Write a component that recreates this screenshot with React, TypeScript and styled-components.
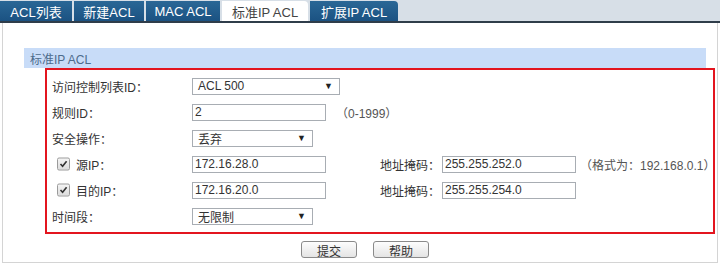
import styled, { createGlobalStyle } from "styled-components";

const GlobalStyle = createGlobalStyle`
  html, body {
    margin: 0;
    padding: 0;
    background: #fff;
  }
  body {
    font-family: "Liberation Sans", "Noto Sans CJK SC", Arial, sans-serif;
    color: #333;
  }
`;

const Page = styled.div`
  width: 720px;
  height: 265px;
  overflow: hidden;
  display: flex;
  flex-direction: column;
`;

const TabBar = styled.div`
  height: 20px;
  padding-top: 1px;
  display: flex;
  align-items: flex-end;
  background: #d7dfe7;
  border-bottom: 2px solid #2f3d4a;
`;

const Tab = styled.div<{ active?: boolean; width: number }>`
  width: ${(p) => p.width}px;
  height: 20px;
  margin-right: 2px;
  display: flex;
  align-items: center;
  justify-content: center;
  font-size: 13px;
  border-radius: 0 ${(p) => (p.width > 80 ? "4px" : "0")} 0 0;
  color: ${(p) => (p.active ? "#444" : "#fff")};
  background: ${(p) =>
    p.active ? "#fff" : "linear-gradient(#2a6796, #1b5282)"};
`;

const Frame = styled.div`
  flex: 1;
  margin: 0 2px 2px 2px;
  border: 1px solid #d4d4d4;
  border-top: none;
  padding: 25px 0 0 21px;
`;

const PanelHeader = styled.div`
  width: 676px;
  height: 20px;
  padding-left: 6px;
  display: flex;
  align-items: center;
  background: #c8dcf8;
  color: #4d6b8c;
  font-size: 12px;
`;

const RedBox = styled.div`
  width: 670px;
  margin-left: 21px;
  border: 2px solid #e3151f;
  padding: 3px 0 3px 5px;
  box-sizing: border-box;
`;

const Row = styled.div`
  height: 26px;
  display: flex;
  align-items: center;
  font-size: 12px;
  & > * {
    flex-shrink: 0;
  }
`;

const Label = styled.div<{ indent?: boolean }>`
  width: ${(p) => (p.indent ? 116 : 140)}px;
  padding-left: ${(p) => (p.indent ? 24 : 0)}px;
  position: relative;
  white-space: nowrap;
`;

const Check = styled.span`
  position: absolute;
  left: 5px;
  top: 50%;
  transform: translateY(-50%);
  width: 11px;
  height: 11px;
  border: 1px solid #9a9a9a;
  border-radius: 2px;
  background: linear-gradient(#f4f4f4, #dcdcdc);
  display: flex;
  align-items: center;
  justify-content: center;
`;

const TextInput = styled.input<{ width: number }>`
  width: ${(p) => p.width}px;
  height: 17px;
  box-sizing: border-box;
  border: 1px solid #a8adb3;
  padding: 0 2px;
  margin: 0;
  font-family: "Liberation Sans", Arial, sans-serif;
  font-size: 12px;
  color: #333;
  outline: none;
`;

const Select = styled.div<{ width: number }>`
  width: ${(p) => p.width}px;
  height: 17px;
  box-sizing: border-box;
  border: 1px solid #a8adb3;
  padding: 0 6px 0 5px;
  display: flex;
  align-items: center;
  justify-content: space-between;
  font-size: 12px;
  color: #333;
`;

const Arrow = styled.span`
  font-size: 9px;
  color: #222;
`;

const Hint = styled.span<{ gap: number }>`
  margin-left: ${(p) => p.gap}px;
  color: #555;
  white-space: nowrap;
`;

const MaskLabel = styled.span`
  margin-left: 54px;
  width: 62px;
  white-space: nowrap;
`;

const Buttons = styled.div`
  width: 682px;
  display: flex;
  justify-content: center;
  gap: 16px;
  margin-top: 7px;
`;

const Button = styled.button`
  width: 56px;
  height: 17px;
  padding: 0;
  border: 1px solid #8a8a8a;
  border-radius: 3px;
  background: linear-gradient(#fdfdfd, #e4e4e4);
  font-family: "Liberation Sans", "Noto Sans CJK SC", sans-serif;
  font-size: 12px;
  color: #333;
`;

const tabs = [
  { name: "ACL列表", width: 72 },
  { name: "新建ACL", width: 70 },
  { name: "MAC ACL", width: 74 },
  { name: "标准IP ACL", width: 86, active: true },
  { name: "扩展IP ACL", width: 88 },
];

const CheckMark = () => (
  <svg width="9" height="9" viewBox="0 0 9 9">
    <path d="M1.5 4.5 L3.6 6.8 L7.6 1.8" fill="none" stroke="#333" strokeWidth="1.6" />
  </svg>
);

export default function App() {
  return (
    <Page>
      <GlobalStyle />
      <TabBar>
        {tabs.map((t) => (
          <Tab key={t.name} width={t.width} active={t.active}>
            {t.name}
          </Tab>
        ))}
      </TabBar>
      <Frame>
        <PanelHeader>标准IP ACL</PanelHeader>
        <RedBox>
          <Row>
            <Label>访问控制列表ID：</Label>
            <Select width={148}>
              ACL 500<Arrow>▼</Arrow>
            </Select>
          </Row>
          <Row>
            <Label>规则ID：</Label>
            <TextInput width={134} value="2" readOnly />
            <Hint gap={10}>（0-1999）</Hint>
          </Row>
          <Row>
            <Label>安全操作：</Label>
            <Select width={121}>
              丢弃<Arrow>▼</Arrow>
            </Select>
          </Row>
          <Row>
            <Label indent>
              <Check>
                <CheckMark />
              </Check>
              源IP：
            </Label>
            <TextInput width={134} value="172.16.28.0" readOnly />
            <MaskLabel>地址掩码：</MaskLabel>
            <TextInput width={134} value="255.255.252.0" readOnly />
            <Hint gap={4}>（格式为：192.168.0.1）</Hint>
          </Row>
          <Row>
            <Label indent>
              <Check>
                <CheckMark />
              </Check>
              目的IP：
            </Label>
            <TextInput width={134} value="172.16.20.0" readOnly />
            <MaskLabel>地址掩码：</MaskLabel>
            <TextInput width={134} value="255.255.254.0" readOnly />
          </Row>
          <Row>
            <Label>时间段：</Label>
            <Select width={121}>
              无限制<Arrow>▼</Arrow>
            </Select>
          </Row>
        </RedBox>
        <Buttons>
          <Button>提交</Button>
          <Button>帮助</Button>
        </Buttons>
      </Frame>
    </Page>
  );
}
